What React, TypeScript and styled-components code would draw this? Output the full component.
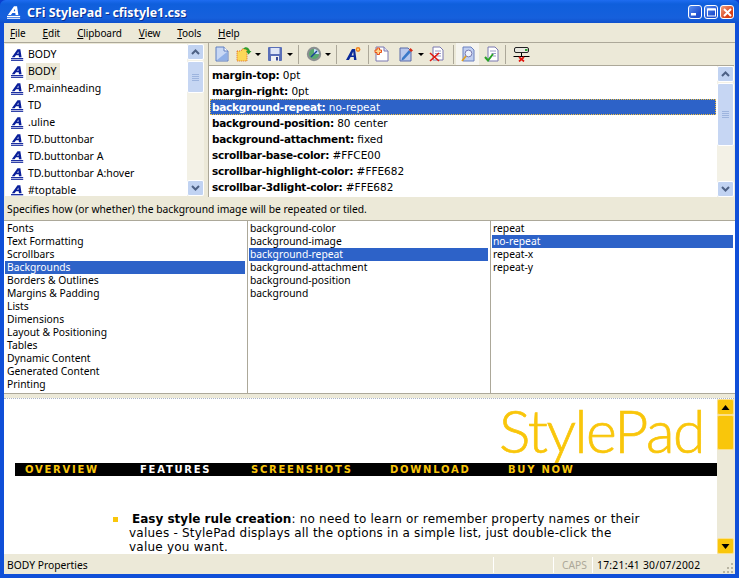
import React from "react";
import styled, { createGlobalStyle } from "styled-components";

const GlobalStyle = createGlobalStyle`
  html, body { margin: 0; padding: 0; background: #0a3fd0; }
  * { box-sizing: border-box; }
`;

const UI_FONT = `"Noto Sans", "Open Sans", "Liberation Sans", sans-serif`;
const WEB_FONT = `"DejaVu Sans", "Liberation Sans", sans-serif`;
const SELECT = "#2d62c8";

const Win = styled.div`
  width: 739px;
  height: 578px;
  overflow: hidden;
  display: flex;
  flex-direction: column;
  background: #0f4fd8;
  border-radius: 6px 6px 0 0;
  font-family: ${UI_FONT};
  font-size: 10.3px;
  color: #000;
`;

const TitleBar = styled.div`
  height: 23px;
  flex: none;
  display: flex;
  align-items: center;
  padding: 1px 5px 0 7px;
  background: linear-gradient(#1e6cf0 0, #0f5fdc 4px, #1660dc 18px, #0f50cc 23px);
`;

const TitleText = styled.div`
  margin-left: 6px;
  color: #fff;
  font: bold 12.4px "Noto Sans", sans-serif;
  text-shadow: 1px 1px #0a2f90;
  flex: 1;
`;

const CapButton = styled.div<{ $close?: boolean }>`
  width: 14px;
  height: 14px;
  margin-left: 2px;
  border: 1px solid #fff;
  border-radius: 3px;
  background: ${({ $close }) =>
    $close
      ? "linear-gradient(135deg, #f0a080, #d84018 70%)"
      : "linear-gradient(135deg, #5a90f0, #2050d0 70%)"};
  display: flex;
  align-items: center;
  justify-content: center;
`;

const Client = styled.div`
  flex: 1;
  min-height: 0;
  margin: 0 4px 4px 4px;
  background: #ece9d8;
  display: flex;
  flex-direction: column;
`;

const MenuBar = styled.div`
  height: 20px;
  flex: none;
  display: flex;
  align-items: center;
  padding-left: 6px;
  gap: 17px;
  border-bottom: 1px solid #aca899;
  font-size: 10px;
  letter-spacing: -0.1px;
`;

const MenuItem = styled.span`
  &::first-letter {
    text-decoration: underline;
  }
`;

const TopPane = styled.div`
  height: 156px;
  flex: none;
  display: flex;
  padding-right: 1px;
`;

const RuleSide = styled.div`
  width: 199px;
  height: 152px;
  margin: 1px 0 0 1px;
  flex: none;
  display: flex;
  background: #fff;
`;

const RuleList = styled.div`
  flex: 1;
  padding-top: 2px;
  overflow: hidden;
`;

const RuleRow = styled.div`
  height: 17px;
  display: flex;
  align-items: center;
  padding-left: 6px;
  gap: 2px;
  font-size: 10.5px;
`;

const RuleName = styled.span<{ $current?: boolean }>`
  padding: 0 3px 0 2px;
  line-height: 17px;
  background: ${({ $current }) => ($current ? "#ece9d8" : "transparent")};
`;

const RightSide = styled.div`
  flex: 1;
  margin-left: 4px;
  display: flex;
  flex-direction: column;
  min-width: 0;
`;

const Toolbar = styled.div`
  height: 22px;
  flex: none;
  display: flex;
  align-items: center;
  padding-left: 2px;
  border-left: 1px solid #aca899;
`;

const ToolButton = styled.div<{ $w: number; $ml?: number; $active?: boolean }>`
  width: ${({ $w }) => $w}px;
  margin-left: ${({ $ml }) => $ml ?? 0}px;
  height: 22px;
  flex: none;
  display: flex;
  align-items: center;
  justify-content: center;
  background: ${({ $active }) => ($active ? "#f6f5ef" : "transparent")};
`;

const ToolSep = styled.div<{ $l: number; $r: number }>`
  width: 1px;
  height: 19px;
  flex: none;
  background: #aca899;
  margin: 0 ${({ $r }) => $r}px 0 ${({ $l }) => $l}px;
`;

const Arrow = styled.div`
  width: 0;
  height: 0;
  border-left: 3px solid transparent;
  border-right: 3px solid transparent;
  border-top: 3px solid #000;
`;

const PropPane = styled.div`
  height: 132px;
  flex: none;
  display: flex;
  background: #fff;
  border-top: 1px solid #aca899;
  border-left: 1px solid #aca899;
`;

const PropList = styled.div`
  flex: 1;
  padding: 1px 1px 0 1px;
  min-width: 0;
`;

const PropRow = styled.div<{ $selected?: boolean }>`
  height: 16px;
  line-height: 16px;
  padding-left: 2px;
  font-family: ${WEB_FONT};
  font-size: 10.5px;
  white-space: nowrap;
  color: ${({ $selected }) => ($selected ? "#fff" : "#000")};
  background: ${({ $selected }) => ($selected ? SELECT : "transparent")};
  outline: ${({ $selected }) => ($selected ? "1px dotted #f0c040" : "none")};
  outline-offset: -1px;
  b {
    font-weight: bold;
    letter-spacing: -0.24px;
  }
`;

const ScrollBar = styled.div<{ $yellow?: boolean }>`
  width: 17px;
  flex: none;
  display: flex;
  flex-direction: column;
  background: ${({ $yellow }) => ($yellow ? "#ece9d8" : "#f3f1e6")};
`;

const ScrollBtn = styled.div<{ $yellow?: boolean }>`
  height: 16px;
  flex: none;
  border-radius: 2px;
  display: flex;
  align-items: center;
  justify-content: center;
  border: 1px solid ${({ $yellow }) => ($yellow ? "#fce08a" : "#fff")};
  background: ${({ $yellow }) => ($yellow ? "#f9c60b" : "#c1d3f2")};
`;

const ScrollThumb = styled.div<{ $h: number; $top: number; $yellow?: boolean }>`
  height: ${({ $h }) => $h}px;
  margin-top: ${({ $top }) => $top}px;
  flex: none;
  border-radius: 2px;
  border: 1px solid ${({ $yellow }) => ($yellow ? "#fce08a" : "#fff")};
  background: ${({ $yellow }) => ($yellow ? "#f9c60b" : "#c6d6f3")};
  display: flex;
  flex-direction: column;
  align-items: center;
  justify-content: center;
  gap: 1px;
`;

const Grip = styled.i`
  display: block;
  width: 7px;
  height: 1px;
  background: #9db4de;
`;

const Spacer = styled.div`
  flex: 1;
`;

const HintBar = styled.div`
  height: 21px;
  flex: none;
  padding: 1px 0 0 3px;
  line-height: 19px;
  white-space: nowrap;
`;

const Columns = styled.div`
  height: 174px;
  flex: none;
  display: grid;
  grid-template-columns: 243px 243px 1fr;
  background: #fff;
  border-top: 1px solid #aca899;
  border-bottom: 1px solid #aca899;
`;

const Column = styled.div`
  padding: 1px 2px 0 1px;
  & + & {
    border-left: 1px solid #aca899;
  }
  & + & > div {
    padding-left: 1px;
  }
`;

const ColItem = styled.div<{ $selected?: boolean }>`
  height: 13px;
  line-height: 13px;
  padding-left: 2px;
  white-space: nowrap;
  color: ${({ $selected }) => ($selected ? "#fff" : "#000")};
  background: ${({ $selected }) => ($selected ? SELECT : "transparent")};
`;

const Preview = styled.div`
  height: 156px;
  flex: none;
  margin: 4px 1px 0 0;
  display: flex;
  background: #fff;
  border-top: 1px dotted #aab4c8;
`;

const PageArea = styled.div`
  flex: 1;
  min-width: 0;
  overflow: hidden;
`;

const LogoRow = styled.div`
  height: 64px;
  display: flex;
  justify-content: flex-end;
  padding-right: 13px;
`;

const Logo = styled.div`
  font-family: "Lato", "Open Sans", sans-serif;
  font-weight: 300;
  font-size: 59px;
  line-height: 62px;
  height: 64px;
  letter-spacing: -1.5px;
  margin-top: 1px;
  color: #f9c60b;
  -webkit-text-stroke: 0.7px #f9c60b;
`;

const NavBar = styled.div`
  position: relative;
  height: 13px;
  margin-left: 11px;
  background: #000;
  display: flex;
  align-items: center;
  padding-left: 10px;
  font-family: ${WEB_FONT};
  font-weight: bold;
  font-size: 10px;
  letter-spacing: 1.75px;
  white-space: nowrap;
`;

const NavLink = styled.span<{ $w: number; $current?: boolean }>`
  width: ${({ $w }) => $w}px;
  flex: none;
  color: ${({ $current }) => ($current ? "#fff" : "#f9c60b")};
`;

const Feature = styled.div`
  margin: 36px 0 0 109px;
  display: flex;
  font-family: ${WEB_FONT};
  font-size: 12px;
  line-height: 14px;
  letter-spacing: 0.22px;
`;

const Bullet = styled.div`
  width: 5px;
  height: 5px;
  margin: 5px 11px 0 0;
  flex: none;
  background: #f9c60b;
`;

const FeatureText = styled.div`
  white-space: nowrap;
  b {
    margin-left: 3px;
    letter-spacing: 0;
  }
`;

const StatusBar = styled.div`
  flex: 1;
  display: flex;
  align-items: flex-start;
  padding-top: 3px;
`;

const StatusCell = styled.div<{ $w?: number; $muted?: boolean; $pad?: number; $wide?: boolean }>`
  ${({ $w }) => ($w ? `width: ${$w}px; flex: none;` : "flex: 1;")}
  height: 16px;
  line-height: 16px;
  padding-left: ${({ $pad }) => $pad ?? 3}px;
  letter-spacing: ${({ $wide }) => ($wide ? "0.27px" : "0")};
  color: ${({ $muted }) => ($muted ? "#aca899" : "#000")};
  & + & {
    border-left: 1px solid #fff;
  }
`;

const ResizeGrip = styled.svg`
  flex: none;
  align-self: flex-end;
  margin-right: 1px;
`;

const AIcon = ({ color = "#0a1f9a", size = 16 }: { color?: string; size?: number }) => (
  <svg width={size} height={size} viewBox="0 0 16 16" style={{ flex: "none" }}>
    <path d="M1 11.5 L8 1.5 H11.5 L13 11.5 H9.8 L9.5 9 H6.2 L4.4 11.5 Z M7.6 7.2 H9.3 L9 4.2 Z" fill={color} fillRule="evenodd" />
    <rect x="0" y="12.4" width="15" height="1.4" fill={color} />
    <rect x="0" y="14.6" width="15" height="1.2" fill={color} />
  </svg>
);

const Chevron = ({ up, color = "#4d6185" }: { up?: boolean; color?: string }) => (
  <svg width="9" height="6" viewBox="0 0 9 6">
    <path d={up ? "M1 5 L4.5 1.5 L8 5" : "M1 1 L4.5 4.5 L8 1"} fill="none" stroke={color} strokeWidth="2" />
  </svg>
);

const Tri = ({ up }: { up?: boolean }) => (
  <svg width="9" height="5" viewBox="0 0 9 5">
    <path d={up ? "M0.5 5 H8.5 L4.5 0 Z" : "M0.5 0 H8.5 L4.5 5 Z"} fill="#000" />
  </svg>
);

const DocBase = () => (
  <>
    <path d="M2 1 H10 L14 5 V15 H2 Z" fill="#fff" stroke="#7a78b0" />
    <path d="M10 1 V5 H14" fill="#e6e6f4" stroke="#7a78b0" />
  </>
);

const NewIcon = () => (
  <svg width="16" height="16" viewBox="0 0 16 16">
    <path d="M2 1 H10 L14 5 V15 H2 Z" fill="#c8d8f4" stroke="#5f7fc0" />
    <path d="M3 14 L13 6 V14 Z" fill="#8fb0e8" />
    <path d="M10 1 V5 H14" fill="#fff" stroke="#5f7fc0" />
  </svg>
);

const OpenIcon = () => (
  <svg width="16" height="16" viewBox="0 0 16 16">
    <path d="M1 5 H5 L6 3 H11 V15 H1 Z" fill="#fcd858" stroke="#e06a20" strokeDasharray="1 1" />
    <path d="M7 3 C9 0 13 1 14 5 L15.5 5 L12.5 8.5 L10 5 H11.5 C11 3.5 9 3 7 3 Z" fill="#2f9e2f" />
  </svg>
);

const SaveIcon = () => (
  <svg width="16" height="16" viewBox="0 0 16 16">
    <rect x="1" y="1" width="14" height="14" rx="1" fill="#5a6fb8" />
    <rect x="3.5" y="2" width="9" height="6" fill="#dfe6f6" />
    <rect x="4" y="10" width="8" height="5" fill="#f2f2f2" />
    <rect x="9" y="11" width="2" height="3.5" fill="#3a4a90" />
  </svg>
);

const GlobeIcon = () => (
  <svg width="16" height="16" viewBox="0 0 16 16">
    <circle cx="8" cy="8" r="7.2" fill="#8a8f90" />
    <circle cx="8" cy="8" r="5" fill="#58a870" />
    <path d="M8 3 A5 5 0 0 1 13 8 L8 8 Z" fill="#c8e0f8" />
    <path d="M5 11 L11 5" stroke="#1a3f9a" strokeWidth="1.5" />
  </svg>
);

const StyleIcon = () => (
  <svg width="16" height="16" viewBox="0 0 16 16">
    <path d="M1 14 L7 3 H10 L11.5 14 H9 L8.8 11 H5.6 L4 14 Z M6.6 9.4 H8.6 L8.2 5.6 Z" fill="#0a2a9a" fillRule="evenodd" />
    <circle cx="13" cy="3.5" r="2.4" fill="#f08020" />
    <circle cx="13" cy="3.5" r="1" fill="#ffe080" />
  </svg>
);

const NewRuleIcon = () => (
  <svg width="16" height="16" viewBox="0 0 16 16">
    <DocBase />
    <path d="M1 4 H3 V2 H5.5 V4 H7.5 V6.5 H5.5 V8.5 H3 V6.5 H1 Z" fill="#ffd890" stroke="#e85018" />
  </svg>
);

const EditIcon = () => (
  <svg width="16" height="16" viewBox="0 0 16 16">
    <path d="M2 2 H10 L13 5 V15 H2 Z" fill="#b8c8ec" stroke="#5a6aa8" />
    <path d="M4 12 L11 4 L13 6 L6 13.5 L3.5 14.5 Z" fill="#3a78c8" />
    <path d="M11 4 L12.5 2 L15 4.5 L13 6 Z" fill="#d83018" />
  </svg>
);

const DeleteIcon = () => (
  <svg width="16" height="16" viewBox="0 0 16 16">
    <path d="M4 1 H11 L14 4 V14 H4 Z" fill="#fff" stroke="#7a78b0" />
    <path d="M6 5 H12 M6 7.5 H12 M6 10 H12" stroke="#9a9ac8" />
    <path d="M1 7 L10 15 M1 15 L10 7" stroke="#e01810" strokeWidth="1.6" />
  </svg>
);

const InspectIcon = () => (
  <svg width="16" height="16" viewBox="0 0 16 16">
    <path d="M3 1 H11 L14 4 V15 H3 Z" fill="#c0cff0" stroke="#6a80c0" />
    <circle cx="8.5" cy="7.5" r="3.4" fill="#eef3fc" stroke="#7a7ab0" />
    <path d="M6 10 L2 15" stroke="#e0a020" strokeWidth="1.8" />
  </svg>
);

const CheckIcon = () => (
  <svg width="16" height="16" viewBox="0 0 16 16">
    <path d="M4 1 H11 L14 4 V15 H4 Z" fill="#fff" stroke="#7a78b0" />
    <path d="M6 5 H12 M7.5 7.5 H12 M9 10 H12" stroke="#9a9ac8" />
    <path d="M1 11 L4 14.5 L9 8" fill="none" stroke="#28a028" strokeWidth="2" />
  </svg>
);

const NetIcon = () => (
  <svg width="17" height="16" viewBox="0 0 17 16">
    <rect x="1.5" y="1.5" width="14" height="5" rx="1.5" fill="#e8e8e0" stroke="#222" />
    <rect x="12" y="3" width="2.5" height="2" fill="#30a030" />
    <path d="M8.5 7 V10 M0.5 10.5 H16.5" stroke="#000" />
    <path d="M6 11 L11 15.5 M11 11 L6 15.5" stroke="#e01810" strokeWidth="1.7" />
  </svg>
);

const rules = [
  "BODY",
  "BODY",
  "P.mainheading",
  "TD",
  ".uline",
  "TD.buttonbar",
  "TD.buttonbar A",
  "TD.buttonbar A:hover",
  "#toptable",
];

const props = [
  ["margin-top", "0pt"],
  ["margin-right", "0pt"],
  ["background-repeat", "no-repeat"],
  ["background-position", "80 center"],
  ["background-attachment", "fixed"],
  ["scrollbar-base-color", "#FFCE00"],
  ["scrollbar-highlight-color", "#FFE682"],
  ["scrollbar-3dlight-color", "#FFE682"],
];

const categories = [
  "Fonts",
  "Text Formatting",
  "Scrollbars",
  "Backgrounds",
  "Borders & Outlines",
  "Margins & Padding",
  "Lists",
  "Dimensions",
  "Layout & Positioning",
  "Tables",
  "Dynamic Content",
  "Generated Content",
  "Printing",
];

const properties = [
  "background-color",
  "background-image",
  "background-repeat",
  "background-attachment",
  "background-position",
  "background",
];

const values = ["repeat", "no-repeat", "repeat-x", "repeat-y"];

const menus = ["File", "Edit", "Clipboard", "View", "Tools", "Help"];

function App() {
  return (
    <>
      <GlobalStyle />
      <Win>
        <TitleBar>
          <AIcon color="#fff" size={14} />
          <TitleText>CFi StylePad - cfistyle1.css</TitleText>
          <CapButton>
            <svg width="8" height="8" viewBox="0 0 8 8">
              <rect x="0" y="5" width="5" height="2.5" fill="#fff" />
            </svg>
          </CapButton>
          <CapButton>
            <svg width="9" height="9" viewBox="0 0 9 9">
              <rect x="0.5" y="1" width="8" height="7" fill="none" stroke="#fff" />
              <rect x="0.5" y="0.5" width="8" height="2" fill="#fff" />
            </svg>
          </CapButton>
          <CapButton $close>
            <svg width="9" height="9" viewBox="0 0 9 9">
              <path d="M1 1 L8 8 M8 1 L1 8" stroke="#fff" strokeWidth="2" />
            </svg>
          </CapButton>
        </TitleBar>
        <Client>
          <MenuBar>
            {menus.map((m) => (
              <MenuItem key={m}>{m}</MenuItem>
            ))}
          </MenuBar>
          <TopPane>
            <RuleSide>
              <RuleList>
                {rules.map((r, i) => (
                  <RuleRow key={i}>
                    <AIcon size={13} />
                    <RuleName $current={i === 1}>{r}</RuleName>
                  </RuleRow>
                ))}
              </RuleList>
              <ScrollBar>
                <ScrollBtn>
                  <Chevron up />
                </ScrollBtn>
                <ScrollThumb $h={32} $top={1}>
                  <Grip />
                  <Grip />
                  <Grip />
                  <Grip />
                </ScrollThumb>
                <Spacer />
                <ScrollBtn>
                  <Chevron />
                </ScrollBtn>
              </ScrollBar>
            </RuleSide>
            <RightSide>
              <Toolbar>
                <ToolButton $w={22}>
                  <NewIcon />
                </ToolButton>
                <ToolButton $w={22}>
                  <OpenIcon />
                </ToolButton>
                <ToolButton $w={6}>
                  <Arrow />
                </ToolButton>
                <ToolButton $w={22} $ml={3}>
                  <SaveIcon />
                </ToolButton>
                <ToolButton $w={8}>
                  <Arrow />
                </ToolButton>
                <ToolSep $l={4} $r={4} />
                <ToolButton $w={21}>
                  <GlobeIcon />
                </ToolButton>
                <ToolButton $w={8}>
                  <Arrow />
                </ToolButton>
                <ToolSep $l={4} $r={4} />
                <ToolButton $w={23}>
                  <StyleIcon />
                </ToolButton>
                <ToolSep $l={4} $r={4} />
                <ToolButton $w={18}>
                  <NewRuleIcon />
                </ToolButton>
                <ToolButton $w={24} $ml={3}>
                  <EditIcon />
                </ToolButton>
                <ToolButton $w={6}>
                  <Arrow />
                </ToolButton>
                <ToolButton $w={26}>
                  <DeleteIcon />
                </ToolButton>
                <ToolSep $l={3} $r={2} />
                <ToolButton $w={23} $active>
                  <InspectIcon />
                </ToolButton>
                <ToolButton $w={25}>
                  <CheckIcon />
                </ToolButton>
                <ToolSep $l={1} $r={4} />
                <ToolButton $w={22}>
                  <NetIcon />
                </ToolButton>
              </Toolbar>
              <PropPane>
                <PropList>
                  {props.map(([k, v], i) => (
                    <PropRow key={k} $selected={i === 2}>
                      <b>{k}:</b> {v}
                    </PropRow>
                  ))}
                </PropList>
                <ScrollBar>
                  <ScrollBtn>
                    <Chevron up />
                  </ScrollBtn>
                  <ScrollThumb $h={63} $top={1}>
                    <Grip />
                    <Grip />
                    <Grip />
                    <Grip />
                  </ScrollThumb>
                  <Spacer />
                  <ScrollBtn>
                    <Chevron />
                  </ScrollBtn>
                </ScrollBar>
              </PropPane>
            </RightSide>
          </TopPane>
          <HintBar>Specifies how (or whether) the background image will be repeated or tiled.</HintBar>
          <Columns>
            <Column>
              {categories.map((c, i) => (
                <ColItem key={c} $selected={i === 3}>
                  {c}
                </ColItem>
              ))}
            </Column>
            <Column>
              {properties.map((c, i) => (
                <ColItem key={c} $selected={i === 2}>
                  {c}
                </ColItem>
              ))}
            </Column>
            <Column>
              {values.map((c, i) => (
                <ColItem key={c} $selected={i === 1}>
                  {c}
                </ColItem>
              ))}
            </Column>
          </Columns>
          <Preview>
            <PageArea>
              <LogoRow>
                <Logo>StylePad</Logo>
              </LogoRow>
              <NavBar>
                <NavLink $w={115}>OVERVIEW</NavLink>
                <NavLink $w={111} $current>
                  FEATURES
                </NavLink>
                <NavLink $w={139}>SCREENSHOTS</NavLink>
                <NavLink $w={118}>DOWNLOAD</NavLink>
                <NavLink $w={90}>BUY NOW</NavLink>
              </NavBar>
              <Feature>
                <Bullet />
                <FeatureText>
                  <b>Easy style rule creation</b>: no need to learn or remember property names or their
                  <br />
                  values - StylePad displays all the options in a simple list, just double-click the
                  <br />
                  value you want.
                </FeatureText>
              </Feature>
            </PageArea>
            <ScrollBar $yellow>
              <ScrollBtn $yellow>
                <Tri up />
              </ScrollBtn>
              <ScrollThumb $h={35} $top={0} $yellow />
              <Spacer />
              <ScrollBtn $yellow>
                <Tri />
              </ScrollBtn>
            </ScrollBar>
          </Preview>
          <StatusBar>
            <StatusCell $w={489}>BODY Properties</StatusCell>
            <StatusCell $w={60} />
            <StatusCell $w={39} $muted $pad={8}>
              CAPS
            </StatusCell>
            <StatusCell $wide $pad={4}>
              17:21:41 30/07/2002
            </StatusCell>
            <ResizeGrip width="11" height="11" viewBox="0 0 11 11">
              <path d="M8 0h2v2H8zM4 4h2v2H4zM8 4h2v2H8zM0 8h2v2H0zM4 8h2v2H4zM8 8h2v2H8z" fill="#b8b4a2" />
            </ResizeGrip>
          </StatusBar>
        </Client>
      </Win>
    </>
  );
}

export default App;
